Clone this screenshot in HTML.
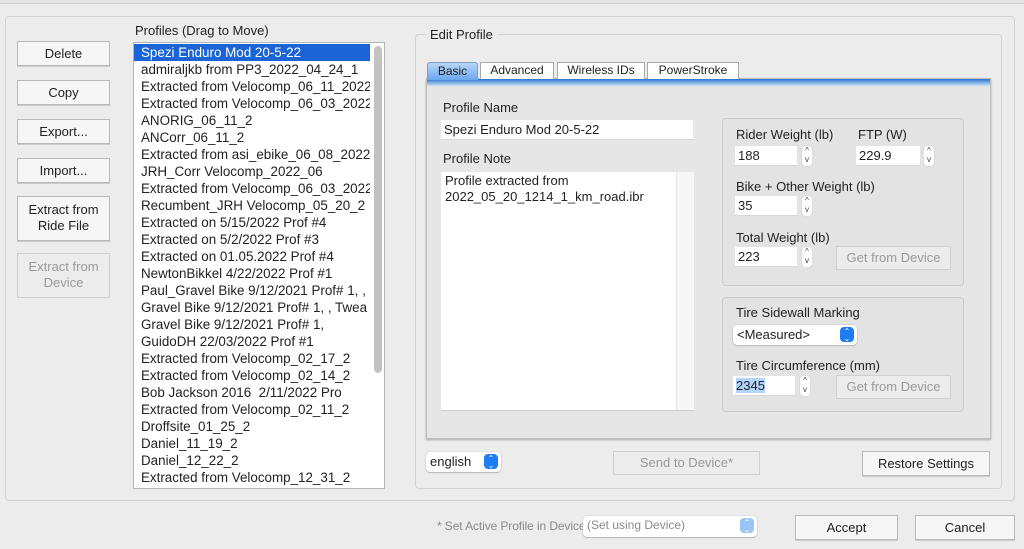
<!DOCTYPE html><html><head><style>
*{box-sizing:border-box}
body{margin:0;width:1024px;height:549px;background:#ececec;font-family:"Liberation Sans",sans-serif;font-size:13px;color:#222;position:relative;overflow:hidden}
.a{position:absolute}
.btn{position:absolute;background:#f6f6f6;border:1px solid #b9b9b9;text-align:center;font-size:13px;box-shadow:0 1px 0 #ccc}
.dis{color:#9a9a9a;background:#ececec;border-color:#d0d0d0;box-shadow:none}
.fld{position:absolute;background:#fff;border-bottom:1px solid #d8d8d8;padding:2px 3px;font-size:13px}
.step{position:absolute;width:12px;height:22px;background:#fff;border-radius:5px;border:1px solid #ddd;font-size:8px;line-height:9px;text-align:center;color:#444}
.lbl{position:absolute;font-size:13px}
.sel{position:absolute;background:#fff;border-radius:4px;box-shadow:0 0 1px #999,0 1px 1px #bbb;padding:2px 4px;font-size:13px}
.arr{position:absolute;right:3px;top:2px;width:14px;height:15px;background:#1f7cf3;border-radius:4px;color:#fff;font-size:8px;line-height:7px;text-align:center;padding-top:1px}
.list div{height:17px;line-height:17px;padding-left:7px;white-space:nowrap;overflow:hidden;font-size:13.4px}
</style></head><body>
<div class="a" style="left:0;top:0;width:1024px;height:4px;border-bottom:1px solid #cfcfcf;background:#e4e4e4"></div>
<div class="a" style="left:5px;top:16px;width:1010px;height:485px;border:1px solid #d3d3d3;border-radius:4px"></div>
<div class="btn" style="left:17px;top:41px;width:93px;height:25px;line-height:23px">Delete</div>
<div class="btn" style="left:17px;top:80px;width:93px;height:25px;line-height:23px">Copy</div>
<div class="btn" style="left:17px;top:119px;width:93px;height:25px;line-height:23px">Export...</div>
<div class="btn" style="left:17px;top:158px;width:93px;height:25px;line-height:23px">Import...</div>
<div class="btn" style="left:17px;top:196px;width:93px;height:45px;line-height:16px;padding-top:5px">Extract from<br>Ride File</div>
<div class="btn dis" style="left:17px;top:253px;width:93px;height:45px;line-height:16px;padding-top:5px">Extract from<br>Device</div>
<div class="lbl" style="left:135px;top:23px">Profiles (Drag to Move)</div>
<div class="a list" style="left:133px;top:42px;width:252px;height:447px;background:#fff;border:1px solid #b5b5b5;padding-top:1px;padding-right:14px">
<div style="background:#1b64d8;color:#fff">Spezi Enduro Mod 20-5-22</div>
<div>admiraljkb from PP3_2022_04_24_1</div><div>Extracted from Velocomp_06_11_2022</div><div>Extracted from Velocomp_06_03_2022</div><div>ANORIG_06_11_2</div><div>ANCorr_06_11_2</div><div>Extracted from asi_ebike_06_08_2022</div><div>JRH_Corr Velocomp_2022_06</div><div>Extracted from Velocomp_06_03_2022</div><div>Recumbent_JRH Velocomp_05_20_2</div><div>Extracted on 5/15/2022 Prof #4</div><div>Extracted on 5/2/2022 Prof #3</div><div>Extracted on 01.05.2022 Prof #4</div><div>NewtonBikkel 4/22/2022 Prof #1</div><div>Paul_Gravel Bike 9/12/2021 Prof# 1, ,</div><div>Gravel Bike 9/12/2021 Prof# 1, , Twea</div><div>Gravel Bike 9/12/2021 Prof# 1,</div><div>GuidoDH 22/03/2022 Prof #1</div><div>Extracted from Velocomp_02_17_2</div><div>Extracted from Velocomp_02_14_2</div><div>Bob Jackson 2016&nbsp; 2/11/2022 Pro</div><div>Extracted from Velocomp_02_11_2</div><div>Droffsite_01_25_2</div><div>Daniel_11_19_2</div><div>Daniel_12_22_2</div><div>Extracted from Velocomp_12_31_2</div>
<span class="a" style="right:2px;top:3px;width:8px;height:327px;background:#c2c2c2;border-radius:4px"></span>
</div>
<div class="a" style="left:415px;top:34px;width:587px;height:455px;border:1px solid #d3d3d3;border-radius:4px"></div>
<div class="lbl" style="left:426px;top:27px;background:#ececec;padding:0 4px">Edit Profile</div>
<div class="a" style="left:426px;top:78px;width:565px;height:361px;background:#e6e6e6;border:1px solid #bdbdbd;box-shadow:0 1px 2px #aaa"></div>
<div class="a" style="left:427px;top:79px;width:563px;height:7px;background:linear-gradient(#2a74d2,#8fb8e8 60%,#cfdff3)"></div>
<div class="a" style="left:427px;top:62px;width:51px;height:18px;background:linear-gradient(#b9d6f7,#6aa8ef);border:1px solid #7d9ec8;border-bottom:none;border-radius:3px 3px 0 0;font-size:12px;text-align:center;line-height:16px">Basic</div>
<div class="a" style="left:480px;top:62px;width:74px;height:17px;background:#fff;border:1px solid #aaa;border-bottom:none;font-size:12px;text-align:center;line-height:15px">Advanced</div>
<div class="a" style="left:557px;top:62px;width:88px;height:17px;background:#fff;border:1px solid #aaa;border-bottom:none;font-size:12px;text-align:center;line-height:15px">Wireless IDs</div>
<div class="a" style="left:647px;top:62px;width:92px;height:17px;background:#fff;border:1px solid #aaa;border-bottom:none;font-size:12px;text-align:center;line-height:15px">PowerStroke</div>
<div class="lbl" style="left:443px;top:100px">Profile Name</div>
<div class="fld" style="left:441px;top:120px;width:252px;height:20px">Spezi Enduro Mod 20-5-22</div>
<div class="lbl" style="left:443px;top:151px">Profile Note</div>
<div class="a" style="left:441px;top:172px;width:253px;height:239px;background:#fff;border-bottom:1px solid #ccc;padding:1px 4px;line-height:16px">Profile extracted from<br>2022_05_20_1214_1_km_road.ibr<span class="a" style="left:235px;top:0;width:18px;height:238px;background:#f7f7f7;border-left:1px solid #e4e4e4"></span></div>
<div class="a" style="left:722px;top:118px;width:242px;height:168px;border:1px solid #cbcbcb;border-radius:4px;background:#e3e3e3"></div>
<div class="a" style="left:722px;top:297px;width:242px;height:115px;border:1px solid #cbcbcb;border-radius:4px;background:#e3e3e3"></div>
<div class="lbl" style="left:736px;top:127px">Rider Weight (lb)</div>
<div class="lbl" style="left:858px;top:127px">FTP (W)</div>
<div class="fld" style="left:735px;top:146px;width:62px;height:20px">188</div>
<div class="step" style="left:801px;top:145px">^<br>v</div>
<div class="fld" style="left:856px;top:146px;width:64px;height:20px">229.9</div>
<div class="step" style="left:923px;top:145px">^<br>v</div>
<div class="lbl" style="left:736px;top:179px">Bike + Other Weight (lb)</div>
<div class="fld" style="left:735px;top:196px;width:62px;height:20px">35</div>
<div class="step" style="left:801px;top:195px">^<br>v</div>
<div class="lbl" style="left:736px;top:230px">Total Weight (lb)</div>
<div class="fld" style="left:735px;top:247px;width:62px;height:20px">223</div>
<div class="step" style="left:801px;top:246px">^<br>v</div>
<div class="btn dis" style="left:836px;top:246px;width:115px;height:24px;line-height:22px">Get from Device</div>
<div class="lbl" style="left:736px;top:305px">Tire Sidewall Marking</div>
<div class="sel" style="left:733px;top:325px;width:124px;height:20px">&lt;Measured&gt;<span class="arr">⌃<br>⌄</span></div>
<div class="lbl" style="left:736px;top:358px">Tire Circumference (mm)</div>
<div class="fld" style="left:733px;top:376px;width:62px;height:20px"><span style="background:#b3d4fc">2345</span></div>
<div class="step" style="left:799px;top:375px">^<br>v</div>
<div class="btn dis" style="left:836px;top:375px;width:115px;height:24px;line-height:22px">Get from Device</div>
<div class="sel" style="left:426px;top:452px;width:75px;height:20px">english<span class="arr">⌃<br>⌄</span></div>
<div class="btn dis" style="left:613px;top:451px;width:147px;height:24px;line-height:22px">Send to Device*</div>
<div class="btn" style="left:862px;top:451px;width:128px;height:25px;line-height:23px">Restore Settings</div>
<div class="lbl" style="left:437px;top:519px;color:#8a8a8a;font-size:12px;letter-spacing:-0.1px">* Set Active Profile in Device</div>
<div class="sel" style="left:583px;top:516px;width:174px;height:21px;color:#8a8a8a;font-size:12px">(Set using Device)<span class="arr" style="background:#9cc3f5">⌃<br>⌄</span></div>
<div class="btn" style="left:795px;top:515px;width:103px;height:25px;line-height:23px">Accept</div>
<div class="btn" style="left:915px;top:515px;width:100px;height:25px;line-height:23px">Cancel</div>
</body></html>
